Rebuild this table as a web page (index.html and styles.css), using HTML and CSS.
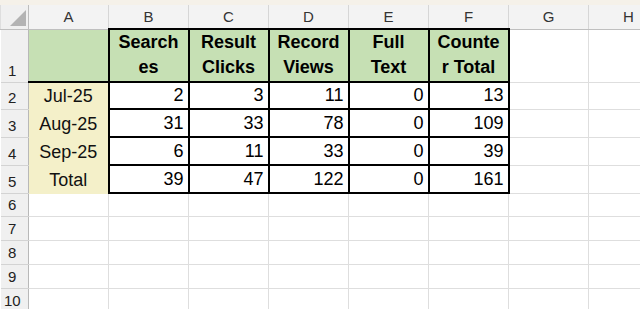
FILE: index.html
```html
<!DOCTYPE html>
<html>
<head>
<meta charset="utf-8">
<link rel="stylesheet" href="styles.css">
</head>
<body>
<div class="topband"></div>
<table class="sheet">
<colgroup>
<col class="c-rh"><col class="c"><col class="c"><col class="c"><col class="c"><col class="c"><col class="c"><col class="c"><col class="c">
</colgroup>
<tr class="r-ch">
<th class="corner"><svg class="tri" width="28" height="23" viewBox="0 0 28 23"><polygon points="25,5 25,21 9,21" fill="#b3b3b3"/></svg></th>
<th class="ch">A</th><th class="ch">B</th><th class="ch">C</th><th class="ch">D</th><th class="ch">E</th><th class="ch">F</th><th class="ch">G</th><th class="ch">H</th>
</tr>
<tr class="r1">
<th class="rh">1</th>
<td class="a1"></td>
<td class="t hd">Search<br>es</td>
<td class="t hd">Result<br>Clicks</td>
<td class="t hd">Record<br>Views</td>
<td class="t hd">Full<br>Text</td>
<td class="t hd">Counte<br>r Total</td>
<td></td><td></td>
</tr>
<tr class="r2">
<th class="rh">2</th>
<td class="lab">Jul-25</td>
<td class="t n">2</td><td class="t n">3</td><td class="t n">11</td><td class="t n">0</td><td class="t n">13</td>
<td></td><td></td>
</tr>
<tr class="r3">
<th class="rh">3</th>
<td class="lab">Aug-25</td>
<td class="t n">31</td><td class="t n">33</td><td class="t n">78</td><td class="t n">0</td><td class="t n">109</td>
<td></td><td></td>
</tr>
<tr class="r3">
<th class="rh">4</th>
<td class="lab">Sep-25</td>
<td class="t n">6</td><td class="t n">11</td><td class="t n">33</td><td class="t n">0</td><td class="t n">39</td>
<td></td><td></td>
</tr>
<tr class="r3">
<th class="rh">5</th>
<td class="lab">Total</td>
<td class="t n">39</td><td class="t n">47</td><td class="t n">122</td><td class="t n">0</td><td class="t n">161</td>
<td></td><td></td>
</tr>
<tr class="r6"><th class="rh">6</th><td></td><td></td><td></td><td></td><td></td><td></td><td></td><td></td></tr>
<tr class="r7"><th class="rh">7</th><td></td><td></td><td></td><td></td><td></td><td></td><td></td><td></td></tr>
<tr class="r7"><th class="rh">8</th><td></td><td></td><td></td><td></td><td></td><td></td><td></td><td></td></tr>
<tr class="r7"><th class="rh">9</th><td></td><td></td><td></td><td></td><td></td><td></td><td></td><td></td></tr>
<tr class="r7"><th class="rh">10</th><td></td><td></td><td></td><td></td><td></td><td></td><td></td><td></td></tr>
</table>
</body>
</html>
```

FILE: styles.css
```css
html, body {
  margin: 0;
  padding: 0;
  background: #ffffff;
  overflow: hidden;
}
body {
  font-family: "Liberation Sans", Arial, sans-serif;
  color: #000;
}
.topband {
  height: 5px;
  background: #f5f1e9;
}
.sheet {
  border-collapse: collapse;
  table-layout: fixed;
  width: 668px;
}
col.c-rh { width: 28px; }
col.c { width: 80px; }

.sheet td, .sheet th {
  border: 1px solid #dedede;
  padding: 0 4px;
  overflow: hidden;
  white-space: nowrap;
  vertical-align: bottom;
  font-weight: normal;
  line-height: 20px;
}
.r-ch th {
  height: 23px;
  border-top: none;
  background: #f3f3f3;
  border-bottom: 1px solid #bfbfbf;
  border-right: 1px solid #d6d6d6;
  font-size: 15px;
  color: #333;
  text-align: center;
  vertical-align: middle;
  padding: 0;
}
.r-ch th.corner {
  background: #f0f0f0;
  border-right: 1px solid #bdbdbd;
  vertical-align: top;
}
.tri { display: block; }

th.rh {
  background: #f0f0f0;
  border-right: 1px solid #b8b8b8;
  border-bottom: 1px solid #d3d3d3;
  border-left: none;
  font-size: 15px;
  color: #222;
  text-align: center;
  padding: 0 4px 1px 0;
}
.r1 td, .r1 th { height: 50px; }
.r2 td, .r2 th { height: 22px; }
.r3 td, .r3 th { height: 23px; }
.r6 td, .r6 th { height: 21px; }
.r7 td, .r7 th { height: 22px; }

td.a1 {
  background: #c6e0b4;
  border-bottom: 2px solid #000;
  border-right-color: #c6e0b4;
}
td.t {
  border: 2px solid #000;
}
td.hd {
  background: #c6e0b4;
  font-weight: bold;
  font-size: 18px;
  line-height: 25px;
  text-align: center;
  padding: 0 2px 1px 2px;
}
td.n {
  font-size: 18px;
  text-align: right;
  padding: 0 4px 3px 4px;
}
td.lab {
  background: #f4f0c9;
  border-top-color: #f4f0c9;
  border-bottom-color: #f4f0c9;
  font-size: 18px;
  text-align: center;
  padding: 0 4px 3px 4px;
  color: #111;
}
```
